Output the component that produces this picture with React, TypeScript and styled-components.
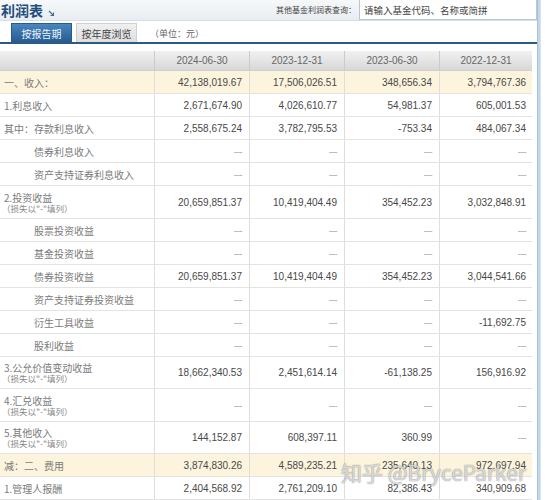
import React from "react";
import styled, { createGlobalStyle } from "styled-components";

const GlobalStyle = createGlobalStyle`
  html, body { margin: 0; padding: 0; background: #ffffff; }
  body {
    font-family: "Liberation Sans", "Noto Sans CJK SC", Arial, sans-serif;
    color: #333;
  }
  * { box-sizing: border-box; }
`;

const Page = styled.div`
  position: relative;
  display: flex;
  width: 545px;
  height: 500px;
  overflow: hidden;
`;

const Main = styled.div`
  width: 537px;
  display: flex;
  flex-direction: column;
`;

const ScrollStrip = styled.div`
  width: 4px;
  background: #c4d6ea;
  border-left: 1px solid #a9c0d9;
  border-right: 1px solid #d8e4f1;
`;

const TopBar = styled.div`
  height: 21px;
  display: flex;
  justify-content: space-between;
  align-items: flex-start;
  background: linear-gradient(#f6f8fa, #e8edf2);
  border-bottom: 1px solid #d6dee7;
`;

const TitleWrap = styled.div`
  display: flex;
  align-items: center;
  gap: 5px;
  padding-left: 1px;
  height: 20px;
`;

const Title = styled.span`
  font-size: 14px;
  font-weight: bold;
  color: #1f4d7d;
  font-family: "Noto Sans CJK SC", sans-serif;
`;

const Search = styled.div`
  display: flex;
  align-items: center;
  gap: 3px;
  margin-top: -1px;
`;

const SearchLabel = styled.span`
  font-size: 8px;
  color: #444;
  font-family: "Noto Sans CJK SC", sans-serif;
`;

const SearchBox = styled.div`
  width: 178px;
  height: 21px;
  border: 1px solid #b9c6d3;
  background: #fff;
  font-size: 9.5px;
  color: #444;
  padding-left: 4px;
  display: flex;
  align-items: center;
  font-family: "Noto Sans CJK SC", sans-serif;
`;

const TabRow = styled.div`
  height: 25px;
  display: flex;
  align-items: flex-end;
  gap: 4px;
  padding-left: 11px;
  border-bottom: 2px solid #2b5a86;
  background: #fff;
`;

const Tab = styled.div<{ $active?: boolean }>`
  width: 61px;
  height: 19px;
  display: flex;
  align-items: center;
  justify-content: center;
  font-size: 10px;
  font-family: "Noto Sans CJK SC", sans-serif;
  color: ${(p) => (p.$active ? "#eef4fa" : "#444")};
  background: ${(p) =>
    p.$active
      ? "linear-gradient(#4a86bf, #255b92)"
      : "linear-gradient(#f0f0f0, #dedede)"};
  border: 1px solid ${(p) => (p.$active ? "#2b5a86" : "#d0d0d0")};
  border-bottom: none;
`;

const Unit = styled.span`
  font-size: 9px;
  color: #666;
  margin-left: 9px;
  align-self: center;
  margin-top: 3px;
  font-family: "Noto Sans CJK SC", sans-serif;
`;

const Table = styled.div`
  margin-top: 7px;
  width: 532px;
  display: flex;
  flex-direction: column;
`;

const cols = "155px 95px 95px 95px 92px";

const HeadRow = styled.div`
  display: grid;
  grid-template-columns: ${cols};
  height: 20px;
  background: linear-gradient(#f1f1f1, #d8d8d8);
  border-bottom: 1px solid #cfcfcf;
`;

const HeadCell = styled.div`
  display: flex;
  align-items: center;
  justify-content: center;
  font-size: 10px;
  color: #666;
  border-right: 1px solid #cbcbcb;
  &:last-child { border-right: none; }
`;

const Row = styled.div<{ $h: number; $hl?: boolean }>`
  display: grid;
  grid-template-columns: ${cols};
  height: ${(p) => p.$h}px;
  background: ${(p) => (p.$hl ? "#fcf4dd" : "#ffffff")};
  border-bottom: 1px solid #e3e3e3;
`;

const LabelCell = styled.div<{ $indent?: boolean }>`
  display: flex;
  flex-direction: column;
  justify-content: center;
  padding-left: ${(p) => (p.$indent ? 34 : 4)}px;
  border-right: 1px solid #dedede;
  font-family: "Noto Sans CJK SC", sans-serif;
  font-size: 10px;
  line-height: 11px;
  color: #7a7a7a;
`;

const SubNote = styled.span`
  font-size: 8.5px;
  line-height: 10px;
  color: #888;
  margin-left: -2px;
`;

const NumCell = styled.div<{ $dash?: boolean }>`
  display: flex;
  align-items: center;
  justify-content: flex-end;
  padding-right: 7px;
  border-right: 1px solid #dedede;
  font-size: 10px;
  color: ${(p) => (p.$dash ? "#b0b0b0" : "#484848")};
  letter-spacing: ${(p) => (p.$dash ? "-0.6px" : "0")};
  &:last-child { border-right: none; padding-right: 6px; }
`;

const Watermark = styled.div`
  position: absolute;
  left: 341px;
  top: 457px;
  font-size: 21px;
  font-family: "Noto Sans CJK SC", "Liberation Sans", sans-serif;
  color: rgba(255, 255, 255, 0.7);
  text-shadow: 0 0 1px rgba(90, 90, 90, 0.55), 0 0 1px rgba(90, 90, 90, 0.55);
  white-space: nowrap;
  pointer-events: none;
`;

type RowData = {
  label: string;
  sub?: boolean;
  indent?: boolean;
  hl?: boolean;
  h: number;
  v: string[];
};

const D = ["---", "---", "---", "---"];

const rows: RowData[] = [
  { label: "一、收入：", hl: true, h: 23, v: ["42,138,019.67", "17,506,026.51", "348,656.34", "3,794,767.36"] },
  { label: "1.利息收入", h: 23, v: ["2,671,674.90", "4,026,610.77", "54,981.37", "605,001.53"] },
  { label: "其中：存款利息收入", h: 23, v: ["2,558,675.24", "3,782,795.53", "-753.34", "484,067.34"] },
  { label: "债券利息收入", indent: true, h: 23, v: D },
  { label: "资产支持证券利息收入", indent: true, h: 23, v: D },
  { label: "2.投资收益", sub: true, h: 33, v: ["20,659,851.37", "10,419,404.49", "354,452.23", "3,032,848.91"] },
  { label: "股票投资收益", indent: true, h: 23, v: D },
  { label: "基金投资收益", indent: true, h: 23, v: D },
  { label: "债券投资收益", indent: true, h: 23, v: ["20,659,851.37", "10,419,404.49", "354,452.23", "3,044,541.66"] },
  { label: "资产支持证券投资收益", indent: true, h: 23, v: D },
  { label: "衍生工具收益", indent: true, h: 23, v: ["---", "---", "---", "-11,692.75"] },
  { label: "股利收益", indent: true, h: 23, v: D },
  { label: "3.公允价值变动收益", sub: true, h: 32, v: ["18,662,340.53", "2,451,614.14", "-61,138.25", "156,916.92"] },
  { label: "4.汇兑收益", sub: true, h: 33, v: D },
  { label: "5.其他收入", sub: true, h: 32, v: ["144,152.87", "608,397.11", "360.99", "---"] },
  { label: "减：二、费用", hl: true, h: 23, v: ["3,874,830.26", "4,589,235.21", "235,640.13", "972,697.94"] },
  { label: "1.管理人报酬", h: 23, v: ["2,404,568.92", "2,761,209.10", "82,386.43", "340,909.68"] },
];

const dates = ["2024-06-30", "2023-12-31", "2023-06-30", "2022-12-31"];

const ArrowIcon = () => (
  <svg width="7" height="7" viewBox="0 0 7 7" style={{ marginTop: 6 }}>
    <path d="M1 1 L5.5 5.5 M2.5 5.5 H5.5 V2.5" stroke="#4b6a8c" strokeWidth="1.1" fill="none" />
  </svg>
);

export default function App() {
  return (
    <>
      <GlobalStyle />
      <Page>
        <Main>
          <TopBar>
            <TitleWrap>
              <Title>利润表</Title>
              <ArrowIcon />
            </TitleWrap>
            <Search>
              <SearchLabel>其他基金利润表查询：</SearchLabel>
              <SearchBox>请输入基金代码、名称或简拼</SearchBox>
            </Search>
          </TopBar>
          <TabRow>
            <Tab $active>按报告期</Tab>
            <Tab>按年度浏览</Tab>
            <Unit>（单位：元）</Unit>
          </TabRow>
          <Table>
            <HeadRow>
              <HeadCell />
              {dates.map((d) => (
                <HeadCell key={d}>{d}</HeadCell>
              ))}
            </HeadRow>
            {rows.map((r, i) => (
              <Row key={i} $h={r.h} $hl={r.hl}>
                <LabelCell $indent={r.indent}>
                  <span>{r.label}</span>
                  {r.sub && <SubNote>（损失以"-"填列）</SubNote>}
                </LabelCell>
                {r.v.map((v, j) => (
                  <NumCell key={j} $dash={v === "---"}>
                    {v}
                  </NumCell>
                ))}
              </Row>
            ))}
          </Table>
        </Main>
        <ScrollStrip />
        <Watermark>知乎 @BryceParker</Watermark>
      </Page>
    </>
  );
}
